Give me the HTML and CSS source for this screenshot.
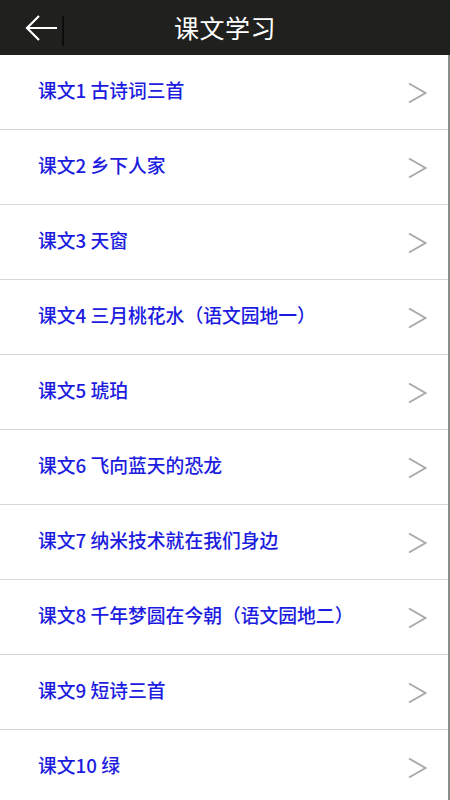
FILE: index.html
```html
<!DOCTYPE html>
<html lang="zh-CN">
<head>
  <meta charset="UTF-8" />
  <meta name="viewport" content="width=device-width, initial-scale=1.0"/>
  <title>课文学习</title>
  <link rel="stylesheet" href="styles.css">
</head>
<body>

  <header>
    <a class="back" href="#">
      <svg width="34" height="28" viewBox="0 0 34 28">
        <path d="M33 14 H3 M15 2 L3 14 L15 26" fill="none" stroke="#fff" stroke-width="2.2"/>
      </svg>
    </a>
    <span class="sep"></span>
    <h1>课文学习</h1>
  </header>

  <main>
    <a class="row" href="#"><span>课文1 古诗词三首</span><i class="chev"></i></a>
    <a class="row" href="#"><span>课文2 乡下人家</span><i class="chev"></i></a>
    <a class="row" href="#"><span>课文3 天窗</span><i class="chev"></i></a>
    <a class="row" href="#"><span>课文4 三月桃花水（语文园地一）</span><i class="chev"></i></a>
    <a class="row" href="#"><span>课文5 琥珀</span><i class="chev"></i></a>
    <a class="row" href="#"><span>课文6 飞向蓝天的恐龙</span><i class="chev"></i></a>
    <a class="row" href="#"><span>课文7 纳米技术就在我们身边</span><i class="chev"></i></a>
    <a class="row" href="#"><span>课文8 千年梦圆在今朝（语文园地二）</span><i class="chev"></i></a>
    <a class="row" href="#"><span>课文9 短诗三首</span><i class="chev"></i></a>
    <a class="row" href="#"><span>课文10 绿</span><i class="chev"></i></a>
  </main>

</body>
</html>
```

FILE: styles.css
```css
* {
  margin: 0;
  padding: 0;
  box-sizing: border-box;
}

body {
  font-family: "Noto Sans CJK SC", "Noto Sans", sans-serif;
  background-color: white;
  overflow: hidden;
}

header {
  position: relative;
  display: flex;
  align-items: center;
  height: 55px;
  background-color: #20211f;
  color: white;
}

.back {
  display: flex;
  margin-left: 24px;
}

.sep {
  width: 2px;
  height: 30px;
  margin-left: 4px;
  margin-top: 6px;
  background-color: #0c0c0c;
}

h1 {
  position: absolute;
  left: 0;
  right: 0;
  top: 0;
  line-height: 55px;
  text-align: center;
  font-size: 25px;
  font-weight: 400;
  letter-spacing: 0.5px;
  pointer-events: none;
}

main {
  border-right: 2px solid #8c8c8c;
  height: 745px;
}

.row {
  display: flex;
  justify-content: space-between;
  align-items: center;
  height: 75px;
  padding: 0 21px 0 38px;
  border-bottom: 1px solid #d6d6d6;
  text-decoration: none;
  color: #1c1ce0;
  font-size: 18.8px;
  font-weight: 500;
}

.row span {
  margin-top: -5px;
}

.chev {
  width: 19px;
  height: 22px;
  margin-top: 2px;
  background: url("data:image/svg+xml,%3Csvg xmlns='http://www.w3.org/2000/svg' width='19' height='22' viewBox='0 0 19 22'%3E%3Cpath d='M1 1.5 L17.5 11 L1 20.5' fill='none' stroke='%23a9a9a9' stroke-width='2'/%3E%3C/svg%3E") no-repeat;
}
```
